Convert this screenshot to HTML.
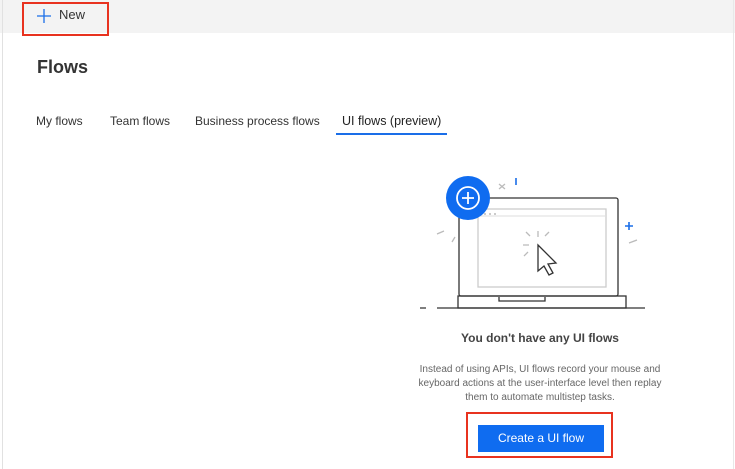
<!DOCTYPE html>
<html><head><style>
body{margin:0;width:735px;height:469px;background:#fff;font-family:"Liberation Sans",sans-serif;position:relative;overflow:hidden}
.abs{position:absolute}
.tab{font-size:12px;color:#333;top:114px;line-height:15px}
</style></head><body>
<div class="abs" style="left:0;top:0;width:735px;height:33px;background:#f3f3f3"></div>
<div class="abs" style="left:2px;top:0;width:1px;height:469px;background:#e1e1e1"></div>
<div class="abs" style="left:733px;top:0;width:1px;height:469px;background:#e8e8e8"></div>
<div class="abs" style="left:22px;top:2px;width:83px;height:30px;border:2px solid #e8321f"></div>
<svg class="abs" style="left:36px;top:8px" width="16" height="16"><path d="M8 1v14M1 8h14" stroke="#1a6ee8" stroke-width="1.3"/></svg>
<div class="abs" style="left:59px;top:7px;font-size:13px;color:#333">New</div>
<div class="abs" style="left:37px;top:57px;font-size:18px;font-weight:bold;color:#333">Flows</div>
<div class="abs tab" style="left:36px">My flows</div>
<div class="abs tab" style="left:110px">Team flows</div>
<div class="abs tab" style="left:195px">Business process flows</div>
<div class="abs tab" style="left:342px;color:#222;font-size:12.5px">UI flows (preview)</div>
<div class="abs" style="left:336px;top:133px;width:111px;height:2px;background:#1a6ee8"></div>
<svg class="abs" style="left:420px;top:170px" width="240" height="150">
<g fill="none" stroke="#333" stroke-width="1.3">
<rect x="39" y="28" width="159" height="98" rx="2"/>
<rect x="38" y="126" width="168" height="12"/>
<path d="M17 138H225M0 138H6"/>
<path d="M79 127v4h46v-4"/>
<path d="M118 75l18 18-8 1 5 9-4 2-5-9-6 5z"/>
</g>
<rect x="58" y="39" width="128" height="78" fill="none" stroke="#ccc" stroke-width="1.3"/>
<path d="M58 46H186" stroke="#ddd"/>
<g fill="#bbb"><circle cx="65" cy="44" r="1"/><circle cx="70" cy="44" r="1"/><circle cx="75" cy="44" r="1"/></g>
<g stroke="#bbb" stroke-width="1.3"><path d="M118 61v6M106 62l4 4M125 66l4-4M103 75h6M108 82l-4 4M24 61l-7 3M35 67l-3 5M79 14l6 5M85 14l-6 5M217 70l-8 3"/></g>
<path d="M96 8v7M209 52v8M205 56h8" stroke="#1a6ee8" stroke-width="1.6"/>
<circle cx="48" cy="28" r="22" fill="#0f6cf0"/>
<circle cx="48" cy="28" r="11" fill="none" stroke="#fff" stroke-width="1.8"/>
<path d="M48 22v12M42 28h12" stroke="#fff" stroke-width="1.8"/>
</svg>
<div class="abs" style="left:400px;top:331px;width:280px;text-align:center;font-size:12px;font-weight:bold;color:#444">You don't have any UI flows</div>
<div class="abs" style="left:400px;top:363px;width:280px;text-align:center;font-size:10px;line-height:14px;color:#666">Instead of using APIs, UI flows record your mouse and<br>keyboard actions at the user-interface level then replay<br>them to automate multistep tasks.</div>
<div class="abs" style="left:466px;top:412px;width:143px;height:42px;border:2px solid #e8321f"></div>
<div class="abs" style="left:478px;top:425px;width:126px;height:27px;background:#0f6cf0;color:#fff;font-size:12px;text-align:center;line-height:27px">Create a UI flow</div>
</body></html>
